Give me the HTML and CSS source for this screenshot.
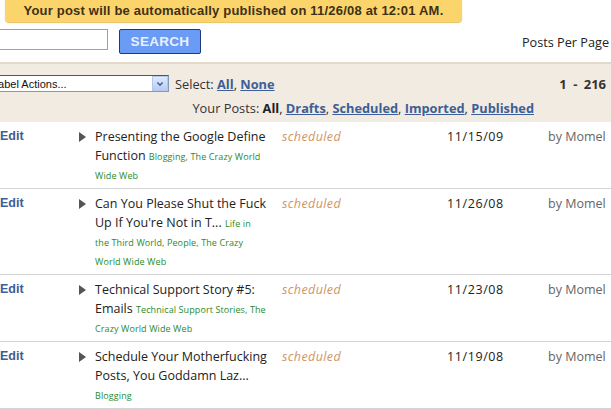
FILE: index.html
```html
<!DOCTYPE html>
<html>
<head>
<meta charset="utf-8">
<link rel="stylesheet" href="styles.css">
</head>
<body>
<div class="page">
  <div class="banner">Your post will be automatically published on 11/26/08 at 12:01 AM.</div>

  <div class="searchbar">
    <div class="search-input"></div>
    <button class="search-btn">SEARCH</button>
    <span class="ppp">Posts Per Page</span>
  </div>

  <div class="toolbar">
    <div class="tb-row">
      <div class="select">
        <span class="select-text">Label Actions...</span>
        <span class="select-arrow">
          <svg width="16" height="16" viewBox="0 0 16 16"><path d="M4.5 6 L8 9.5 L11.5 6" fill="none" stroke="#4d6185" stroke-width="2"/></svg>
        </span>
      </div>
      <span class="sel-links">Select: <a class="lnk">All</a>, <a class="lnk">None</a></span>
      <span class="count">1 - 216</span>
    </div>
    <div class="tb-row2">Your Posts: <b class="cur">All</b>, <a class="lnk">Drafts</a>, <a class="lnk">Scheduled</a>, <a class="lnk">Imported</a>, <a class="lnk">Published</a></div>
  </div>

  <div class="posts">
    <div class="post">
      <a class="edit">Edit</a>
      <span class="tri"></span>
      <div class="title">Presenting the Google Define Function <span class="labels"><a>Blogging</a>, <a>The Crazy World Wide Web</a></span></div>
      <span class="status">scheduled</span>
      <span class="date">11/15/09</span>
      <span class="author">by Momel</span>
    </div>
    <div class="post">
      <a class="edit">Edit</a>
      <span class="tri"></span>
      <div class="title">Can You Please Shut the Fuck Up If You're Not in T... <span class="labels"><a>Life in the&nbsp;Third World</a>, <a>People</a>, <a>The Crazy World Wide Web</a></span></div>
      <span class="status">scheduled</span>
      <span class="date">11/26/08</span>
      <span class="author">by Momel</span>
    </div>
    <div class="post">
      <a class="edit">Edit</a>
      <span class="tri"></span>
      <div class="title">Technical Support Story #5: Emails <span class="labels"><a>Technical Support Stories</a>, <a>The Crazy World Wide Web</a></span></div>
      <span class="status">scheduled</span>
      <span class="date">11/23/08</span>
      <span class="author">by Momel</span>
    </div>
    <div class="post">
      <a class="edit">Edit</a>
      <span class="tri"></span>
      <div class="title">Schedule Your Motherfucking Posts, You Goddamn Laz... <span class="labels"><a>Blogging</a></span></div>
      <span class="status">scheduled</span>
      <span class="date">11/19/08</span>
      <span class="author">by Momel</span>
    </div>
  </div>
</div>
</body>
</html>
```

FILE: styles.css
```css
html, body {
  margin: 0;
  padding: 0;
  background: #fff;
  overflow: hidden;
}
body {
  font-family: "Open Sans", "DejaVu Sans", sans-serif;
  color: #333;
  width: 611px;
  height: 409px;
}
.page {
  width: 611px;
}
.banner {
  margin-left: 5px;
  width: 457px;
  height: 22px;
  background: #fcd46c;
  border-radius: 0 0 4px 4px;
  box-shadow: 0 1px 1px #e8c060;
  color: #3e3116;
  font-weight: bold;
  font-size: 13px;
  letter-spacing: 0.2px;
  line-height: 22px;
  text-align: center;
  font-family: "Liberation Sans", Arial, sans-serif;
}
.searchbar {
  display: flex;
  align-items: flex-start;
  margin-top: 7px;
  height: 26px;
}
.search-input {
  width: 118px;
  margin-left: -12px;
  height: 19px;
  border: 1px solid #8fa3bd;
  background: #fff;
}
.search-btn {
  margin-left: 11px;
  width: 82px;
  height: 25px;
  background: #6a9cf6;
  border: 1px solid #1e3a7a;
  border-radius: 2px;
  color: #e8f0ff;
  font-family: "Liberation Sans", Arial, sans-serif;
  font-size: 13.5px;
  font-weight: bold;
  padding: 0;
  letter-spacing: 0.3px;
}
.ppp {
  margin-left: auto;
  margin-right: 2px;
  font-size: 12.7px;
  line-height: 26px;
  color: #222;
}
.toolbar {
  margin-top: 7px;
  background: #f1ebe2;
  border-top: 2px solid #e3d9ca;
  height: 48px;
  padding-top: 10px;
  box-sizing: content-box;
}
.tb-row {
  display: flex;
  align-items: center;
  height: 19px;
}
.select {
  margin-left: -10px;
  width: 178px;
  height: 15px;
  border: 1px solid #7f9db9;
  border-left: none;
  border-top-color: #555;
  background: #fff;
  display: flex;
  align-items: center;
  font-family: "Liberation Sans", Arial, sans-serif;
  font-size: 11px;
  color: #111;
}
.select-text {
  flex: 1;
  padding-left: 2px;
}
.select-arrow {
  width: 16px;
  height: 15px;
  background: linear-gradient(#dfe9fd, #b6cdf7);
  border: 1px solid #b5c8ec;
  box-sizing: border-box;
  display: flex;
  align-items: center;
  justify-content: center;
}
.select-arrow svg {
  width: 12px;
  height: 12px;
}
.sel-links {
  margin-left: 6px;
  font-size: 12.8px;
}
.lnk {
  color: #3d5e96;
  font-weight: bold;
  text-decoration: underline;
}
.count {
  margin-left: auto;
  margin-right: 5px;
  font-size: 13px;
  font-weight: bold;
  word-spacing: 3px;
  color: #333;
}
.tb-row2 {
  margin-top: 6px;
  text-align: right;
  padding-right: 77px;
  font-size: 12.8px;
  line-height: 18px;
}
.cur {
  color: #222;
}
.posts {
  display: flex;
  flex-direction: column;
}
.post {
  display: grid;
  grid-template-columns: 79px 16px 187px 165px 101px 1fr;
  border-bottom: 1px solid #d4d4d4;
  padding: 5px 0 4px;
  font-size: 12.5px;
  line-height: 19px;
}
.edit {
  color: #3d5e96;
  font-weight: bold;
  font-family: "Liberation Sans", Arial, sans-serif;
  font-size: 12.5px;
}
.tri {
  width: 0;
  height: 0;
  margin-top: 5px;
  border-left: 7px solid #555;
  border-top: 5px solid transparent;
  border-bottom: 5px solid transparent;
}
.title {
  color: #222;
  width: 174px;
}
.labels {
  font-size: 9px;
  letter-spacing: 0.1px;
  line-height: 10px;
  color: #2b8a2b;
}
.labels a {
  color: #2b8a2b;
}
.status {
  font-style: italic;
  color: #cf9468;
  letter-spacing: 0.4px;
}
.date {
  color: #222;
  letter-spacing: 0.6px;
}
.author {
  color: #666;
}
```
